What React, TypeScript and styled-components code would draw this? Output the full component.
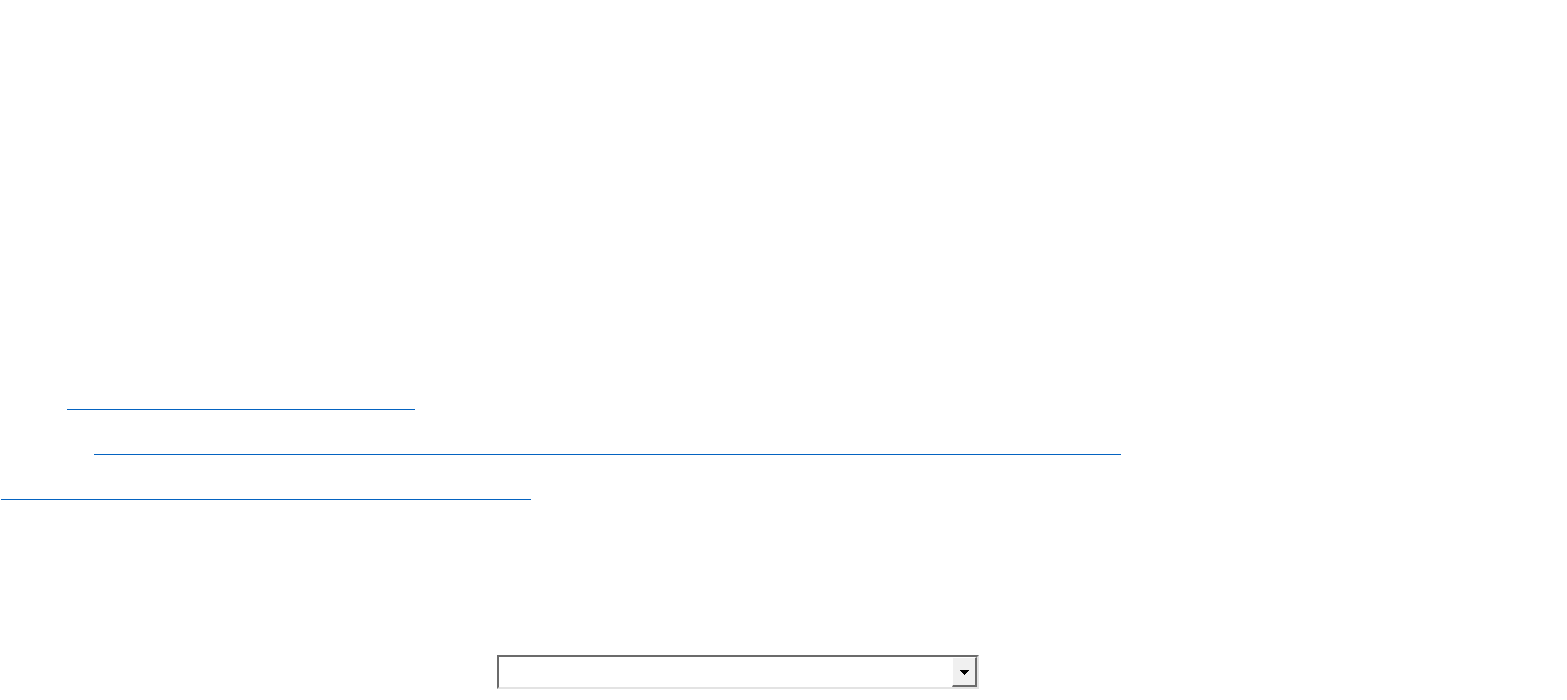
import React from "react";
import styled, { createGlobalStyle } from "styled-components";

const GlobalStyle = createGlobalStyle`
  html, body {
    margin: 0;
    padding: 0;
    background: #ffffff;
    font-family: "Liberation Sans", Arial, sans-serif;
  }
`;

const Page = styled.div`
  width: 1567px;
  height: 700px;
  display: flex;
  flex-direction: column;
  overflow: hidden;
`;

const LinkList = styled.nav`
  margin-top: 389px;
  display: flex;
  flex-direction: column;
  gap: 24px;
`;

const BlankLink = styled.a<{ $indent: number; $width: number }>`
  display: block;
  height: 20px;
  margin-left: ${(p) => p.$indent}px;
  width: ${(p) => p.$width}px;
  border-bottom: 1px solid #0563c1;
  color: #ffffff;
  font-size: 14px;
  line-height: 20px;
  text-decoration: none;
`;

const Combo = styled.div`
  margin-top: 155px;
  margin-left: 497px;
  width: 482px;
  height: 34px;
  box-sizing: border-box;
  display: flex;
  border-style: solid;
  border-width: 2px;
  border-color: #6b6b6b #e3e3e3 #e3e3e3 #6b6b6b;
  background: #ffffff;
`;

const ComboInput = styled.select`
  flex: 1;
  appearance: none;
  border: none;
  outline: none;
  background: transparent;
  font-family: "Liberation Sans", Arial, sans-serif;
  font-size: 14px;
  padding: 0 4px;
`;

const ComboButton = styled.span`
  width: 25px;
  height: 30px;
  box-sizing: border-box;
  display: flex;
  align-items: center;
  justify-content: center;
  padding-top: 2px;
  background: #f0f0f0;
  border-style: solid;
  border-width: 1px 2px 2px 1px;
  border-color: #ffffff #6b6b6b #6b6b6b #ffffff;
`;

const links = [
  { indent: 67, width: 348 },
  { indent: 94, width: 1027 },
  { indent: 1, width: 530 },
];

export default function App() {
  return (
    <>
      <GlobalStyle />
      <Page>
        <LinkList>
          {links.map((l, i) => (
            <BlankLink key={i} href="#" $indent={l.indent} $width={l.width}>
              &nbsp;
            </BlankLink>
          ))}
        </LinkList>
        <Combo>
          <ComboInput aria-label="select">
            <option></option>
          </ComboInput>
          <ComboButton>
            <svg width="9" height="5" viewBox="0 0 9 5">
              <rect x="0" y="0" width="9" height="1" fill="#000" />
              <rect x="1" y="1" width="7" height="1" fill="#000" />
              <rect x="2" y="2" width="5" height="1" fill="#000" />
              <rect x="3" y="3" width="3" height="1" fill="#000" />
              <rect x="4" y="4" width="1" height="1" fill="#000" />
            </svg>
          </ComboButton>
        </Combo>
      </Page>
    </>
  );
}
